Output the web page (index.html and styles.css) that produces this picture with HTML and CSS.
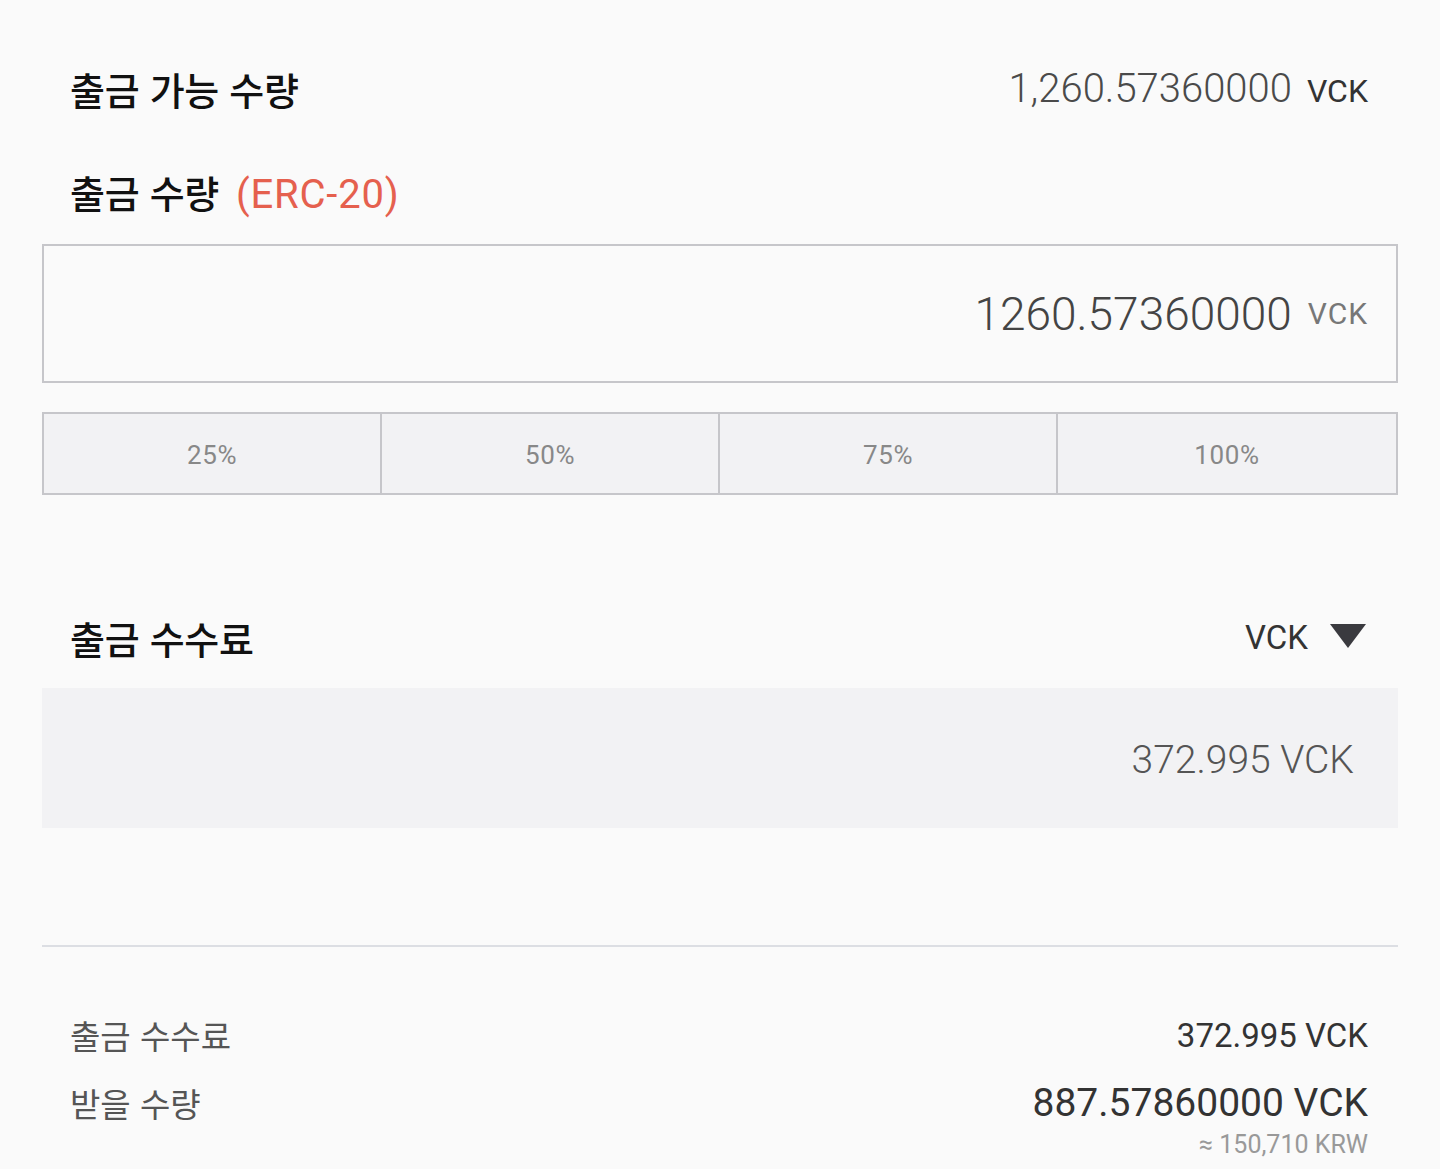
FILE: index.html
```html
<!DOCTYPE html>
<html lang="ko">
<head>
<meta charset="utf-8">
<title>출금</title>
<link rel="stylesheet" href="styles.css">
</head>
<body>
<main class="page">
  <div class="row head avail">
    <span class="title">출금 가능 수량</span>
    <span class="avail-val"><span class="num-light">1,260.57360000</span><span class="unit">VCK</span></span>
  </div>

  <div class="row head amount-title">
    <span class="title">출금 수량<span class="erc">(ERC-20)</span></span>
  </div>

  <div class="input-box">
    <span class="input-num">1260.57360000</span>
    <span class="input-unit">VCK</span>
  </div>

  <div class="pct">
    <div class="pct-cell">25%</div>
    <div class="pct-cell">50%</div>
    <div class="pct-cell">75%</div>
    <div class="pct-cell">100%</div>
  </div>

  <div class="row head fee-title">
    <span class="title">출금 수수료</span>
    <span class="select">VCK
      <svg class="caret" width="36" height="24" viewBox="0 0 36 24"><polygon points="0,0 36,0 18,24" fill="#3a3a3f"/></svg>
    </span>
  </div>

  <div class="fee-box">372.995 VCK</div>

  <hr class="divider">

  <div class="summary">
    <div class="row sum-row r1">
      <span class="label">출금 수수료</span>
      <span class="sum-val small">372.995 VCK</span>
    </div>
    <div class="row sum-row r2">
      <span class="label">받을 수량</span>
      <span class="sum-val big">887.57860000 VCK</span>
    </div>
    <div class="krw">≈ 150,710 KRW</div>
  </div>
</main>
</body>
</html>
```

FILE: styles.css
```css
html, body {
  margin: 0;
  padding: 0;
  background: #fafafa;
}
body {
  font-family: Roboto, "Noto Sans CJK KR", sans-serif;
  color: #111;
}
.page {
  padding: 0 42px;
  height: 1169px;
  box-sizing: border-box;
  overflow: hidden;
}
.row {
  display: flex;
  align-items: center;
  justify-content: space-between;
}
.head {
  height: 80px;
  padding: 0 30px 0 28px;
}
.title {
  font-family: "Noto Sans CJK KR", sans-serif;
  font-weight: 500;
  font-size: 38px;
  color: #111;
  letter-spacing: -0.3px;
}
.avail {
  margin-top: 48px;
}
.avail-val {
  font-family: Roboto, sans-serif;
  white-space: nowrap;
}
.num-light {
  font-weight: 300;
  font-size: 40px;
  color: #4a4a4a;
}
.unit {
  font-weight: 400;
  font-size: 32px;
  color: #333;
  margin-left: 15px;
}
.amount-title {
  margin-top: 23px;
}
.erc {
  font-family: Roboto, sans-serif;
  font-weight: 400;
  color: #e5604e;
  font-size: 40px;
  letter-spacing: 0.8px;
  margin-left: 17px;
}
.input-box {
  margin-top: 13px;
  height: 139px;
  box-sizing: border-box;
  border: 2px solid #c6c6ca;
  display: flex;
  align-items: center;
  justify-content: flex-end;
  padding-right: 28px;
  font-family: Roboto, sans-serif;
}
.input-num {
  font-weight: 300;
  font-size: 46px;
  color: #444;
}
.input-unit {
  font-weight: 400;
  font-size: 30px;
  color: #777;
  letter-spacing: 1px;
  margin-left: 16px;
}
.pct {
  margin-top: 29px;
  height: 83px;
  box-sizing: border-box;
  border: 2px solid #c6c6ca;
  display: grid;
  grid-template-columns: 336px 338px 338px 1fr;
  background: #f2f2f4;
}
.pct-cell {
  display: flex;
  align-items: center;
  justify-content: center;
  font-family: Roboto, sans-serif;
  font-size: 26px;
  color: #888;
  letter-spacing: 0.6px;
  border-left: 2px solid #c6c6ca;
  padding-top: 3px;
}
.pct-cell:first-child {
  border-left: none;
}
.fee-title {
  margin-top: 102px;
  height: 80px;
}
.select {
  display: flex;
  align-items: center;
  font-family: Roboto, sans-serif;
  font-size: 33px;
  color: #333;
  padding-right: 2px;
}
.caret {
  margin-left: 22px;
  margin-top: -2px;
}
.fee-box {
  margin-top: 11px;
  height: 140px;
  background: #f2f2f4;
  display: flex;
  align-items: center;
  justify-content: flex-end;
  padding-right: 44px;
  font-family: Roboto, sans-serif;
  font-weight: 300;
  font-size: 39px;
  color: #555;
  padding-top: 3px;
  box-sizing: border-box;
}
.divider {
  margin: 117px 0 0;
  border: none;
  height: 2px;
  background: #dcdee3;
}
.summary {
  padding: 0 30px 0 28px;
  margin-top: 64px;
}
.sum-row {
  height: 48px;
}
.r2 {
  margin-top: 20px;
}
.label {
  font-family: "Noto Sans CJK KR", sans-serif;
  font-weight: 400;
  font-size: 33px;
  color: #555;
}
.sum-val {
  font-family: Roboto, sans-serif;
  color: #333;
}
.sum-val.small {
  font-size: 33px;
}
.sum-val.big {
  font-size: 39px;
}
.krw {
  text-align: right;
  font-family: Roboto, sans-serif;
  font-size: 25px;
  color: #999;
  margin-top: 3px;
  line-height: 30px;
}
```
